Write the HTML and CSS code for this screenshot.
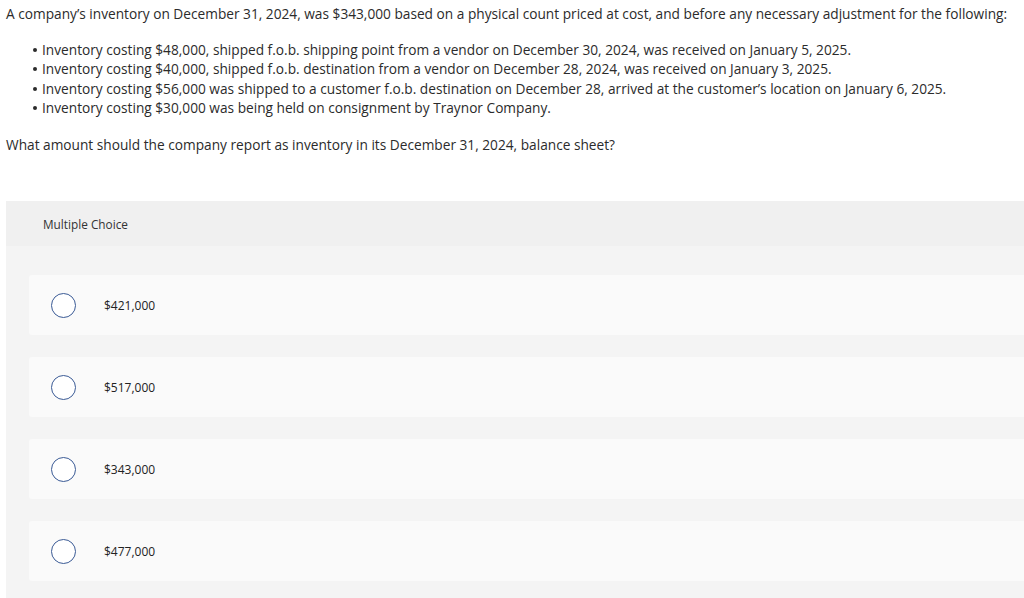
FILE: index.html
```html
<!DOCTYPE html>
<html>
<head>
<meta charset="utf-8">
<link rel="stylesheet" href="styles.css">
</head>
<body>
<div class="page">
  <p class="intro">A company’s inventory on December 31, 2024, was $343,000 based on a physical count priced at cost, and before any necessary adjustment for the following:</p>
  <ul class="items">
    <li>Inventory costing $48,000, shipped f.o.b. shipping point from a vendor on December 30, 2024, was received on January 5, 2025.</li>
    <li>Inventory costing $40,000, shipped f.o.b. destination from a vendor on December 28, 2024, was received on January 3, 2025.</li>
    <li>Inventory costing $56,000 was shipped to a customer f.o.b. destination on December 28, arrived at the customer’s location on January 6, 2025.</li>
    <li>Inventory costing $30,000 was being held on consignment by Traynor Company.</li>
  </ul>
  <p class="question">What amount should the company report as inventory in its December 31, 2024, balance sheet?</p>
  <div class="panel">
    <div class="panel-head">Multiple Choice</div>
    <div class="options">
      <div class="option"><span class="radio"></span><span class="label">$421,000</span></div>
      <div class="option"><span class="radio"></span><span class="label">$517,000</span></div>
      <div class="option"><span class="radio"></span><span class="label">$343,000</span></div>
      <div class="option"><span class="radio"></span><span class="label">$477,000</span></div>
    </div>
  </div>
</div>
</body>
</html>
```
FILE: styles.css
```css
html, body {
  margin: 0;
  padding: 0;
  background: #ffffff;
}
body {
  font-family: "Open Sans", "Liberation Sans", sans-serif;
  color: #2b2b2b;
  font-size: 13.7px;
  overflow: hidden;
}
.page {
  padding: 4px 0 0 6px;
}
.intro {
  margin: 0;
  line-height: 19px;
}
.items {
  margin: 17px 0 0 0;
  padding: 0 0 0 36px;
  list-style: none;
  line-height: 19.3px;
}
.items li {
  position: relative;
}
.items li::before {
  content: "";
  position: absolute;
  left: -9px;
  top: 8px;
  width: 4px;
  height: 4px;
  border-radius: 50%;
  background: #2b2b2b;
}
.question {
  margin: 18px 0 0 0;
  line-height: 19px;
}
.panel {
  margin-top: 47px;
  background: #f4f4f4;
  padding-bottom: 18px;
}
.panel-head {
  background: #f0f0f0;
  height: 45px;
  display: flex;
  align-items: center;
  padding-left: 37px;
  font-size: 11.8px;
  color: #333;
}
.options {
  display: flex;
  flex-direction: column;
  gap: 22px;
  padding: 29px 0 0 23px;
}
.option {
  height: 60px;
  background: #fafafa;
  border-radius: 3px 0 0 3px;
  display: flex;
  align-items: center;
  padding-left: 22px;
}
.radio {
  width: 23px;
  height: 23px;
  border: 1px solid #3a5a95;
  border-radius: 50%;
  background: #fff;
  flex: none;
}
.label {
  margin-left: 28px;
  font-size: 12px;
  color: #222;
}
```
